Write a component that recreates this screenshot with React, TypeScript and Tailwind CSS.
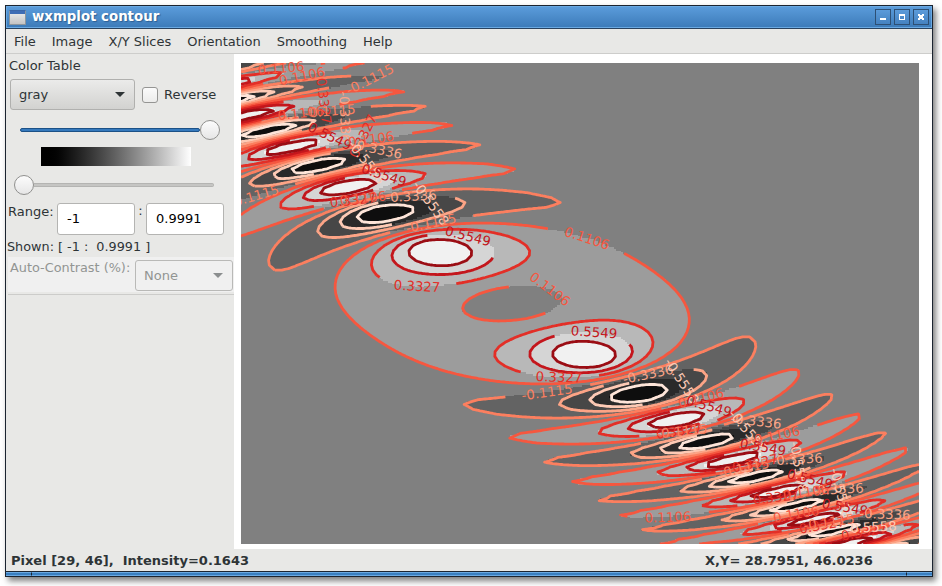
import React from "react";

const W = 678;
const H = 481;
const CX = W / 100;
const CY = H / 100;

// Surface sampled on a 100 x 100 grid, origin at the bottom left.
function surface(i: number, j: number) {
  const x = (i - 40) / 10;
  const y = (j - 50) / 10;
  return Math.sin((x * x) / 3 + y * y) / (1 + (x + y) * (x + y));
}

const STEP = 1.9991 / 9;
const LEVELS = [1, 2, 3, 4, 5, 6, 7, 8].map((k) => -1 + k * STEP);
const LINE_COLORS = ["#fee5d9", "#fdcab5", "#fca486", "#fc7f5f", "#f6573f", "#e32f27", "#c4161c", "#9b0d14"];
const GRAYS = ["#0e0e0e", "#2a2a2a", "#474747", "#636363", "#808080", "#9c9c9c", "#b8b8b8", "#d5d5d5", "#f1f1f1"];

// Half the length of line left out behind a label, for each level.
const GAP = [50, 50, 43, 40, 38, 37, 37, 37];

type Label = [number, number, number, number];

// x, y, rotation, contour level index
const LABELS: Label[] = [
  [281, 68, -5, 4], [302, 76, -12, 4], [370, 79, -27, 3], [324, 101, 83, 5],
  [345, 117, 88, 2], [363, 136, -64, 5], [301, 113, -6, 4], [330, 111, -5, 3],
  [330, 136, 26, 6], [371, 139, -8, 4], [377, 149, 12, 2], [367, 162, 52, 1],
  [254, 196, -16, 3], [384, 175, 18, 6], [353, 200, -6, 5], [363, 198, -6, 4],
  [411, 196, -3, 2], [431, 203, 54, 1], [431, 223, -12, 3], [468, 236, 14, 6],
  [587, 238, 18, 4], [417, 286, 3, 5], [550, 289, 37, 4], [594, 332, 4, 6],
  [559, 377, 2, 5], [547, 392, -8, 3], [648, 374, -12, 2], [682, 381, 57, 1],
  [701, 398, -14, 4], [709, 406, 16, 6], [679, 431, -8, 5], [682, 431, -6, 3],
  [756, 421, 7, 2], [748, 431, 50, 1], [777, 435, -12, 4], [763, 447, 10, 6],
  [797, 459, -3, 2], [755, 463, -12, 5], [744, 468, -12, 3], [799, 467, 80, 1],
  [810, 479, 14, 6], [838, 489, -3, 2], [776, 497, -7, 5], [806, 492, -8, 4],
  [841, 493, 75, 1], [796, 514, -10, 4], [845, 507, 10, 6], [885, 514, 2, 2],
  [668, 517, -2, 4], [822, 525, -10, 5], [829, 522, -8, 3], [864, 532, -10, 5],
  [871, 527, -3, 1],
];

type Pt = [number, number];

function traceContours(level: number): Pt[][] {
  const adj = new Map<string, string[]>();
  const pts = new Map<string, Pt>();
  const link = (a: string, b: string) => {
    adj.set(a, [...(adj.get(a) ?? []), b]);
    adj.set(b, [...(adj.get(b) ?? []), a]);
  };
  const cross = (i: number, j: number, horiz: boolean): string | null => {
    const a = surface(i, j) - level;
    const b = (horiz ? surface(i + 1, j) : surface(i, j + 1)) - level;
    if (a > 0 === b > 0) return null;
    const t = a / (a - b);
    const key = `${i},${j},${horiz ? 1 : 0}`;
    pts.set(key, [(i + (horiz ? t : 0)) * CX, H - (j + (horiz ? 0 : t)) * CY]);
    return key;
  };
  for (let i = 0; i < 100; i++) {
    for (let j = 0; j < 100; j++) {
      const e = [cross(i, j, true), cross(i + 1, j, false), cross(i, j + 1, true), cross(i, j, false)];
      const hit = e.filter((k): k is string => k !== null);
      if (hit.length === 2) link(hit[0], hit[1]);
      if (hit.length === 4) {
        const mid = surface(i + 0.5, j + 0.5) > level;
        const corner = surface(i, j) > level;
        if (mid === corner) {
          link(hit[0], hit[1]);
          link(hit[2], hit[3]);
        } else {
          link(hit[0], hit[3]);
          link(hit[1], hit[2]);
        }
      }
    }
  }
  const seen = new Set<string>();
  const lines: Pt[][] = [];
  const walk = (start: string) => {
    const line: Pt[] = [];
    let cur: string | undefined = start;
    let last = start;
    while (cur !== undefined) {
      seen.add(cur);
      last = cur;
      line.push(pts.get(cur)!);
      cur = adj.get(cur)!.find((n) => !seen.has(n));
    }
    if (line.length > 2 && adj.get(last)!.includes(start)) line.push(pts.get(start)!);
    lines.push(line);
  };
  for (const k of adj.keys()) if (!seen.has(k) && adj.get(k)!.length === 1) walk(k);
  for (const k of adj.keys()) if (!seen.has(k)) walk(k);
  return lines;
}

// Splits long pieces so that a gap can start anywhere along a line.
function refine(line: Pt[]): Pt[] {
  const out: Pt[] = [line[0]];
  for (let k = 1; k < line.length; k++) {
    const [x0, y0] = line[k - 1];
    const [x1, y1] = line[k];
    const n = Math.max(1, Math.ceil(Math.hypot(x1 - x0, y1 - y0) / 2));
    for (let m = 1; m <= n; m++) out.push([x0 + ((x1 - x0) * m) / n, y0 + ((y1 - y0) * m) / n]);
  }
  return out;
}

function contourPath(idx: number): string {
  const lines = traceContours(LEVELS[idx]).map(refine);
  const cut = lines.map((l) => l.map(() => false));
  for (const [lx, ly, , li] of LABELS) {
    if (li !== idx) continue;
    let best = 1e9;
    let bl = 0;
    let bk = 0;
    lines.forEach((l, a) =>
      l.forEach(([x, y], k) => {
        const d = Math.hypot(x + 241 - lx, y + 63 - ly);
        if (d < best) {
          best = d;
          bl = a;
          bk = k;
        }
      }),
    );
    if (best > 20) continue;
    const l = lines[bl];
    const closed = l[0][0] === l[l.length - 1][0] && l[0][1] === l[l.length - 1][1];
    cut[bl][bk] = true;
    for (const dir of [1, -1]) {
      let s = 0;
      let k = bk;
      for (let guard = 0; guard < l.length && s < GAP[idx]; guard++) {
        let n = k + dir;
        if (n < 0 || n >= l.length) {
          if (!closed) break;
          n = (n + l.length) % l.length;
        }
        s += Math.hypot(l[n][0] - l[k][0], l[n][1] - l[k][1]);
        k = n;
        cut[bl][k] = true;
      }
    }
  }
  let d = "";
  lines.forEach((l, a) => {
    let pen = false;
    l.forEach(([x, y], k) => {
      if (cut[a][k]) {
        pen = false;
        return;
      }
      d += `${pen ? "L" : "M"}${x.toFixed(1)} ${y.toFixed(1)}`;
      pen = true;
    });
  });
  return d;
}

// Grey bands as horizontal runs on a grid three times finer than the samples.
function bandPaths(): string[] {
  const d = GRAYS.map(() => "");
  const N = 300;
  for (let r = 0; r < N; r++) {
    const y0 = Math.round((r * H) / N);
    const y1 = Math.round(((r + 1) * H) / N);
    let start = 0;
    let prev = -1;
    for (let c = 0; c <= N; c++) {
      const v = c === N ? -2 : Math.min(8, Math.max(0, Math.floor((surface((c + 0.5) / 3, 100 - (r + 0.5) / 3) + 1) / STEP)));
      if (v !== prev) {
        if (prev >= 0 && prev !== 4) {
          const x0 = Math.round((start * W) / N);
          const x1 = Math.round((c * W) / N);
          d[prev] += `M${x0} ${y0}H${x1}V${y1}H${x0}Z`;
        }
        start = c;
        prev = v;
      }
    }
  }
  return d;
}

const BANDS = bandPaths();
const CONTOURS = LEVELS.map((_, k) => contourPath(k));

function Plot() {
  return (
    <svg width={W} height={H} viewBox={`0 0 ${W} ${H}`} className="block overflow-visible font-['DejaVu_Sans',sans-serif] text-[13.3px]">
      <defs>
        <clipPath id="axes">
          <rect width={W} height={H} />
        </clipPath>
        <clipPath id="labels">
          <rect x="0" y="-6" width={W} height={H + 6} />
        </clipPath>
      </defs>
      <rect width={W} height={H} fill="#808080" />
      <g shapeRendering="crispEdges">
        {BANDS.map((d, k) => (
          <path key={k} d={d} fill={GRAYS[k]} />
        ))}
      </g>
      <g clipPath="url(#axes)" fill="none" strokeWidth="2.8" strokeLinejoin="round">
        {CONTOURS.map((d, k) => (
          <path key={k} d={d} stroke={LINE_COLORS[k]} />
        ))}
      </g>
      <g clipPath="url(#labels)" textAnchor="middle">
        {LABELS.map(([x, y, rot, k], n) => (
          <text key={n} transform={`translate(${x - 241} ${y - 63}) rotate(${rot})`} y="4.8" fill={LINE_COLORS[k]}>
            {LEVELS[k].toFixed(4)}
          </text>
        ))}
      </g>
    </svg>
  );
}

function WindowButton({ children }: { children: React.ReactNode }) {
  return (
    <div className="flex h-4 w-4 items-center justify-center border border-[#2d4f74] bg-linear-to-b from-[#5b9bda] to-[#4582c0]">
      <svg width="8" height="8" shapeRendering="crispEdges" fill="#fff">
        {children}
      </svg>
    </div>
  );
}

function TitleBar() {
  return (
    <div className="flex h-[22px] items-center border border-[#6aa9e2] bg-linear-to-b from-[#5a9bda] to-[#3d7cba] pr-[2px] pl-[2px]">
      <div className="mt-px h-[15px] w-[17px] rounded-[1px] border border-[#8e969c] border-t-[#3c67a8] bg-linear-to-b from-[#f0f0f0] to-[#c4c4c4]">
        <div className="h-[3px] bg-[#3f6db5]" />
      </div>
      <div className="ml-[6px] -mt-px flex-1 text-[13.33px] font-bold text-white [text-shadow:1px_1px_1px_#2d5f93]">wxmplot contour</div>
      <div className="flex gap-[3px]">
        <WindowButton><rect x="1" y="5" width="6" height="2" /></WindowButton>
        <WindowButton><path fillRule="evenodd" d="M1 1H7V7H1ZM2 3V6H6V3Z" /></WindowButton>
        <WindowButton><path d="M1 1H3V2H5V1H7V3H6V5H7V7H5V6H3V7H1V5H2V3H1Z" /></WindowButton>
      </div>
    </div>
  );
}

function Arrow({ color }: { color: string }) {
  return (
    <svg width="10" height="5" fill={color}>
      <path d="M0 0H10L5 5Z" />
    </svg>
  );
}

function Panel() {
  return (
    <div className="w-[228px] shrink-0">
      <div className="flex h-[25px] items-center pb-[2px] pl-[3px]">Color Table</div>
      <div className="flex items-center pl-1">
        <div className="flex h-[31px] w-[125px] items-center justify-between rounded-[3px] border border-[#b0b0ae] bg-linear-to-b from-[#ebebea] to-[#d2d2d0] pr-[9px] pl-2">
          <span>gray</span>
          <Arrow color="#2e3436" />
        </div>
        <div className="ml-[7px] h-4 w-4 rounded-[3px] border border-[#959593] bg-linear-to-b from-[#fbfbfb] to-[#ececeb]" />
        <span className="ml-[6px]">Reverse</span>
      </div>
      <div className="ml-[14px] flex h-10 w-[200px] items-center">
        <div className="h-1 flex-1 rounded-sm border border-[#1c5187] bg-[#3579bd]" />
        <div className="h-5 w-5 rounded-full border border-[#90908e] bg-linear-to-b from-[#fcfcfc] to-[#e6e6e6]" />
      </div>
      <div className="-mt-[3px] ml-[35px] h-[19px] w-[150px] bg-linear-to-r from-black to-white" />
      <div className="ml-2 flex h-[38px] w-[200px] items-center">
        <div className="h-5 w-5 rounded-full border border-[#90908e] bg-linear-to-b from-[#fcfcfc] to-[#e6e6e6]" />
        <div className="h-1 flex-1 rounded-r-sm border border-l-0 border-[#b4b4b2] bg-[#c5c5c3]" />
      </div>
      <div className="-mt-px flex">
        <span className="mt-[1px] ml-[2px] w-[49px] whitespace-nowrap">Range:</span>
        <div className="flex h-8 w-[78px] items-center rounded-[3px] border border-[#b4b4b2] bg-white pl-[9px] text-black">-1</div>
        <span className="w-[11px] pt-0 text-center">:</span>
        <div className="flex h-8 w-[78px] items-center rounded-[3px] border border-[#b4b4b2] bg-white pl-[9px] text-black">0.9991</div>
      </div>
      <div className="mt-px h-[21px] pl-px text-[12.8px] leading-[22px] whitespace-pre">Shown: [ -1 :  0.9991 ]</div>
      <div className="ml-[2px] flex h-[35px] bg-[#f0f0f0] pt-[3px] text-[#929593]">
        <span className="-mt-px ml-[2px] w-[125px] text-[12.85px] leading-[18px] whitespace-nowrap">Auto-Contrast (%):</span>
        <div className="flex h-[31px] w-[98px] items-center justify-between rounded-[3px] border border-[#b9b9b7] pr-[9px] pl-2">
          <span>None</span>
          <Arrow color="#8b8e8f" />
        </div>
      </div>
      <div className="mt-[2px] ml-[2px] h-px bg-[#ccccca]" />
    </div>
  );
}

export default function App() {
  return (
    <div className="h-[586px] w-[942px] overflow-hidden bg-white pt-[5px] pl-[5px] font-['DejaVu_Sans',sans-serif] text-[13px] leading-[16px] text-[#2e3436]">
      <div className="flex h-[572px] w-[928px] flex-col border border-[#1b2430] bg-[#e8e8e6] shadow-[3px_4px_6px_rgba(0,0,0,0.5)]">
        <TitleBar />
        <div className="flex h-[26px] items-center gap-[16px] border-t border-b border-t-[#29435f] border-b-[#cdcdcb] pt-px pl-2">
          <span>File</span>
          <span>Image</span>
          <span>X/Y Slices</span>
          <span>Orientation</span>
          <span>Smoothing</span>
          <span>Help</span>
        </div>
        <div className="flex h-[495px]">
          <Panel />
          <div className="flex-1 bg-white pt-[9px] pl-[7px]">
            <Plot />
          </div>
        </div>
        <div className="flex h-[22px] items-center pt-px pl-[5px] text-[13px] font-bold whitespace-pre">
          <span className="w-[694px]">Pixel [29, 46],  Intensity=0.1643</span>
          <span>X,Y= 28.7951, 46.0236</span>
        </div>
        <div className="flex h-[5px] border-t border-[#1b2430] bg-[#3a7fc0]">
          <div className="w-[26px] border-r border-y border-y-[#6aa9e2] border-r-[#1b2430]" />
          <div className="flex-1 border-y border-[#6aa9e2]" />
          <div className="w-[26px] border-l border-y border-y-[#6aa9e2] border-l-[#1b2430]" />
        </div>
      </div>
    </div>
  );
}
